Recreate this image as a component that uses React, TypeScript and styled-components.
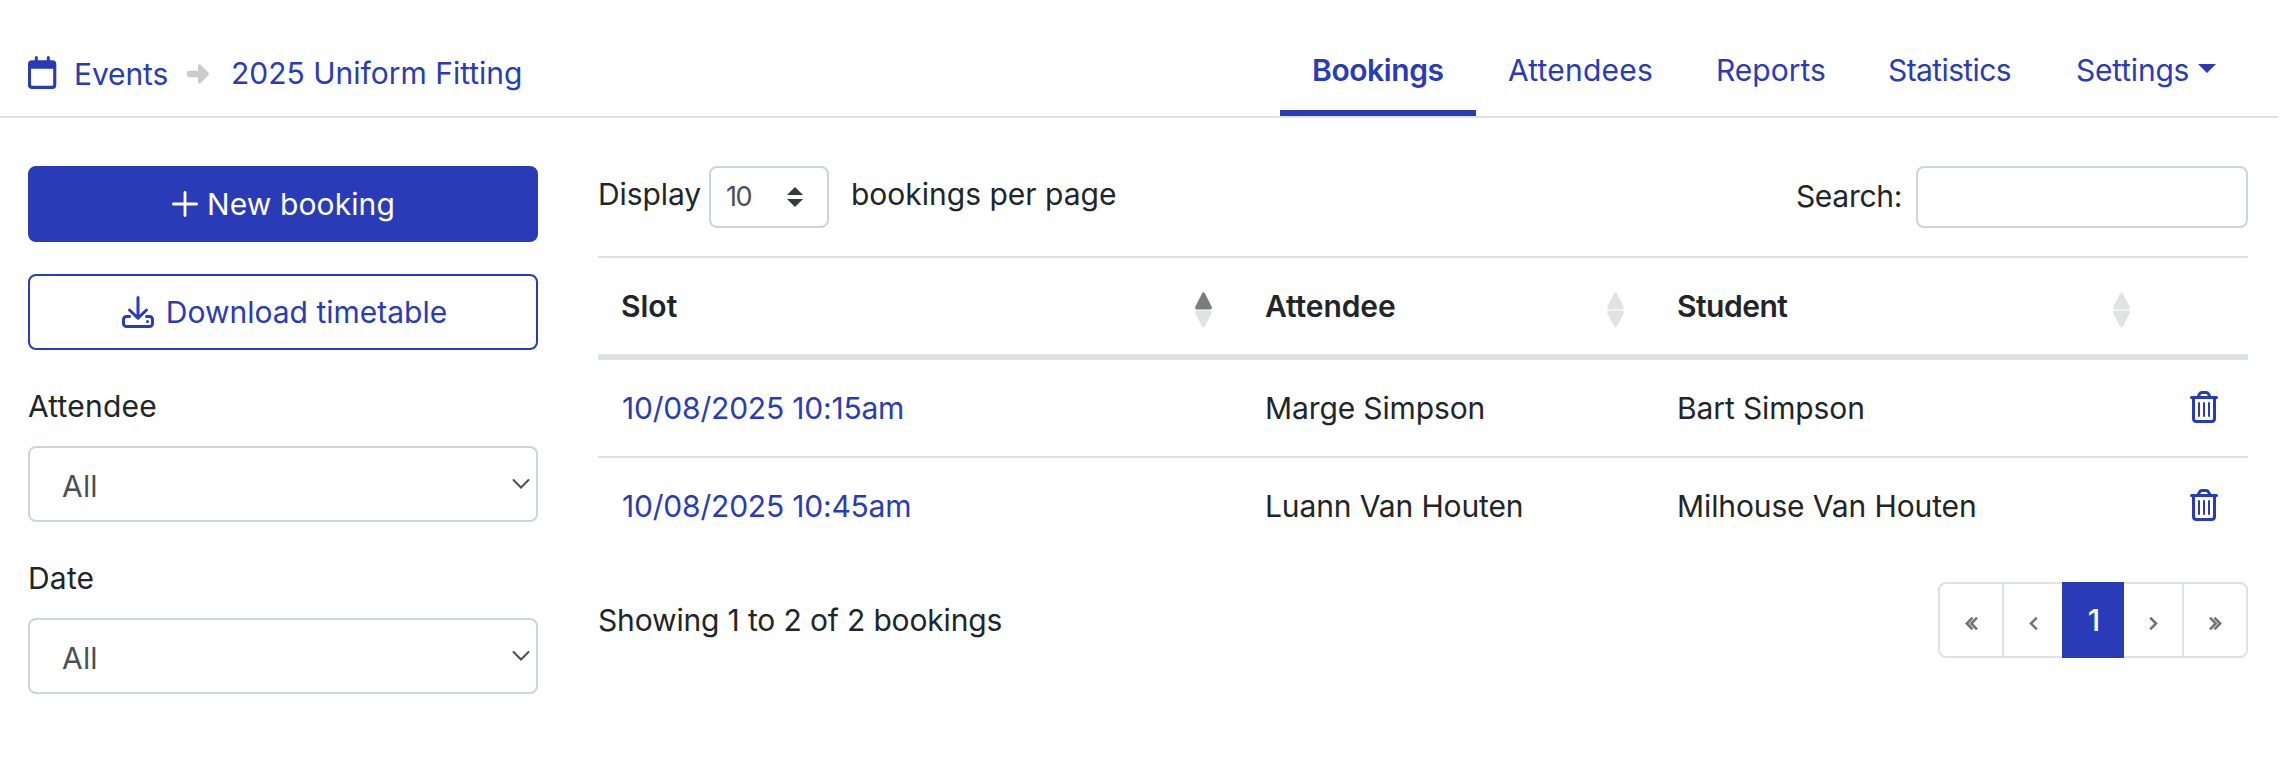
import React from 'react';
import styled, { createGlobalStyle } from 'styled-components';

const color = {
  primary: '#2a3bb7',
  text: '#212529',
  field: '#495057',
  muted: '#6c757d',
  line: '#dee2e6',
  fieldLine: '#ced4da',
};

const GlobalStyle = createGlobalStyle`
  *, *::before, *::after { box-sizing: border-box; }
  body {
    margin: 0;
    background: #fff;
    color: ${color.text};
    font-family: Inter, "Liberation Sans", sans-serif;
    font-size: 30px;
    line-height: 48px;
    -webkit-font-smoothing: antialiased;
  }
  a { color: inherit; text-decoration: none; }
  svg { display: block; flex: none; }
`;

const Page = styled.div`
  width: 100%;
  min-height: 766px;
  background: #fff;
`;

const Header = styled.header`
  display: flex;
  justify-content: space-between;
  height: 118px;
  margin-right: 10px;
  padding: 0 30px 0 28px;
  border-bottom: 2px solid ${color.line};
`;

const Breadcrumb = styled.nav`
  display: flex;
  align-items: flex-start;
  padding-top: 49px;
  color: ${color.primary};
`;

const EventsLink = styled.a`
  display: flex;
  margin-top: 1px;
  width: 159px;
  gap: 17px;
  letter-spacing: -0.1px;
  svg { margin-top: 6px; }
`;

const CrumbArrow = styled.span`
  width: 44px;
  padding-top: 15px;
`;

const Tabs = styled.nav`
  display: flex;
  align-items: flex-end;
`;

const Tab = styled.a<{ $width: number; $active?: boolean; $tracking?: number }>`
  display: flex;
  width: ${(p) => p.$width}px;
  padding: 0 0 16px 32px;
  border-bottom: 6px solid ${(p) => (p.$active ? color.primary : 'transparent')};
  color: ${color.primary};
  font-weight: ${(p) => (p.$active ? 600 : 400)};
  letter-spacing: ${(p) => p.$tracking ?? 0}px;
  white-space: nowrap;
`;

const Caret = styled.span`
  width: 0;
  height: 0;
  margin: 18px 0 0 9px;
  border: 9px solid transparent;
  border-top-color: ${color.primary};
  border-bottom: 0;
`;

const Main = styled.main`
  display: grid;
  grid-template-columns: 510px 1fr;
  column-gap: 60px;
  align-items: start;
  padding: 48px 40px 0 28px;
`;

const Sidebar = styled.aside`
  display: flex;
  flex-direction: column;
  gap: 32px;
`;

const Button = styled.button<{ $outline?: boolean }>`
  display: flex;
  justify-content: center;
  align-items: center;
  gap: ${(p) => (p.$outline ? 12 : 9)}px;
  height: 76px;
  padding: 0 0 0 ${(p) => (p.$outline ? 3 : 1)}px;
  border: 2px solid ${color.primary};
  border-radius: 8px;
  background: ${(p) => (p.$outline ? '#fff' : color.primary)};
  color: ${(p) => (p.$outline ? color.primary : '#fff')};
  font: inherit;
  letter-spacing: ${(p) => (p.$outline ? 0 : 0.1)}px;
`;

const Field = styled.label`
  display: flex;
  flex-direction: column;
  gap: 16px;
  letter-spacing: 0.2px;
`;

const SelectBox = styled.span`
  display: flex;
  justify-content: space-between;
  align-items: center;
  height: 76px;
  padding: 4px 6px 0 32px;
  border: 2px solid ${color.fieldLine};
  border-radius: 8px;
  color: ${color.field};
  svg { margin-top: -4px; }
`;

const Controls = styled.div`
  display: flex;
  justify-content: space-between;
  height: 62px;
  margin-bottom: 28px;
`;

const LengthControl = styled.label`
  display: flex;
  align-items: flex-start;
`;

const LengthText = styled.span<{ $after?: boolean }>`
  width: ${(p) => (p.$after ? 'auto' : '111px')};
  margin: 4px 0 0 ${(p) => (p.$after ? 22 : 0)}px;
  letter-spacing: ${(p) => (p.$after ? 0 : -0.1)}px;
  white-space: nowrap;
`;

const LengthSelect = styled.span`
  display: flex;
  justify-content: space-between;
  align-items: center;
  width: 120px;
  height: 62px;
  padding: 0 24px 0 15px;
  border: 2px solid ${color.fieldLine};
  border-radius: 8px;
  color: ${color.field};
  font-size: 27px;
  letter-spacing: -1.5px;
`;

const SearchControl = styled.label`
  display: flex;
  gap: 14px;
  line-height: 60px;
  letter-spacing: -0.3px;
`;

const SearchInput = styled.input`
  width: 332px;
  height: 62px;
  padding: 0 16px;
  border: 2px solid ${color.fieldLine};
  border-radius: 8px;
  background: #fff;
  font: inherit;
`;

const Table = styled.table`
  width: 100%;
  table-layout: fixed;
  border-collapse: separate;
  border-spacing: 0;
`;

const Th = styled.th<{ $width: number; $tracking?: number }>`
  width: ${(p) => p.$width}px;
  height: 104px;
  padding: 0 30px 0 23px;
  border-top: 2px solid ${color.line};
  border-bottom: 6px solid ${color.line};
  font-weight: 600;
  letter-spacing: ${(p) => p.$tracking ?? 0}px;
  text-align: left;
`;

const HeadCell = styled.div`
  display: flex;
  justify-content: space-between;
  align-items: center;
  svg { margin-top: 7px; }
`;

const Row = styled.tr`
  & + & td { border-top: 2px solid ${color.line}; }
`;

const Td = styled.td<{ $link?: boolean }>`
  padding: 24px 0 24px ${(p) => (p.$link ? 24 : 23)}px;
  color: ${(p) => (p.$link ? color.primary : color.text)};
  letter-spacing: ${(p) => (p.$link ? -0.2 : -0.12)}px;
  white-space: nowrap;
`;

const ActionCell = styled(Td)`
  padding-left: 30px;
  svg { margin-top: -2px; }
`;

const Footer = styled.div`
  display: flex;
  justify-content: space-between;
  align-items: center;
  margin-top: 28px;
`;

const Info = styled.span`
  letter-spacing: -0.15px;
`;

const Pagination = styled.nav`
  display: flex;
  height: 76px;
`;

const PageLink = styled.a<{ $width: number; $active?: boolean; $afterActive?: boolean }>`
  display: flex;
  justify-content: center;
  align-items: center;
  width: ${(p) => p.$width}px;
  border-style: solid;
  border-color: ${(p) => (p.$active ? color.primary : color.line)};
  border-width: 2px 0 2px ${(p) => (p.$afterActive ? 0 : 2)}px;
  background: ${(p) => (p.$active ? color.primary : '#fff')};
  color: ${(p) => (p.$active ? '#fff' : color.muted)};
  font-weight: ${(p) => (p.$active ? 500 : 400)};
  &:first-child { border-radius: 8px 0 0 8px; }
  &:last-child { border-right-width: 2px; border-radius: 0 8px 8px 0; }
  svg { margin-top: 6px; }
`;

const CalendarIcon = () => (
  <svg width="29" height="33" viewBox="0 0 29 33" fill="none">
    <path d="M8.3 1.6V6M20.3 1.6V6" stroke={color.primary} strokeWidth="3" strokeLinecap="round" />
    <path fillRule="evenodd" fill={color.primary} d="M4 4.3h20.3a4 4 0 0 1 4 4V29a4 4 0 0 1-4 4H4a4 4 0 0 1-4-4V8.300a4 4 0 0 1 4-4ZM3 12.800V28.600a1.200 1.200 0 0 0 1.200 1.200H24a1.200 1.200 0 0 0 1.200-1.200V12.800Z" />
  </svg>
);

const ArrowIcon = () => (
  <svg width="22" height="20" viewBox="0 0 22 20" fill="#cbcbcb">
    <path d="M2 6.700H11V2C11 .4 12.700-.2 13.800.9L21.300 8.600C22.100 9.500 22.100 10.500 21.300 11.300L13.800 18.900C12.700 20 11 19.400 11 17.900V13.300H2C.8 13.300 0 12.500 0 11.300V8.700C0 7.500.8 6.700 2 6.700Z" />
  </svg>
);

const PlusIcon = () => (
  <svg width="26" height="26" viewBox="0 0 26 26" stroke="#fff" strokeWidth="2.800" strokeLinecap="round">
    <path d="M1.400 13H24.600M13 1.400V24.600" />
  </svg>
);

const DownloadIcon = () => (
  <svg width="32" height="32" viewBox="0 0 32 32" fill="none" stroke={color.primary} strokeWidth="3" strokeLinecap="round" strokeLinejoin="round">
    <path d="M16 1.500V22M7.500 14L16 22.300L24.500 14" />
    <path d="M7.500 20.500H4.500A3 3 0 0 0 1.500 23.500V27.500A3 3 0 0 0 4.500 30.500H27.500A3 3 0 0 0 30.500 27.500V23.500A3 3 0 0 0 27.500 20.500H24.500" />
    <circle cx="25.500" cy="25.500" r="1.500" fill={color.primary} stroke="none" />
  </svg>
);

const ChevronIcon = () => (
  <svg width="18" height="12" viewBox="0 0 18 12" fill="none" stroke={color.field} strokeWidth="2" strokeLinecap="round">
    <path d="M1.500 2L9 9.500L16.500 2" />
  </svg>
);

const StepperIcon = () => (
  <svg width="16" height="20" viewBox="0 0 16 20" fill="#343a40">
    <path d="M8 0L16 8H0ZM0 12H16L8 20Z" />
  </svg>
);

const SortIcon = ({ ascending = false }: { ascending?: boolean }) => (
  <svg width="17" height="36" viewBox="0 0 17 36">
    <path fill={ascending ? '#7b7c80' : '#e1e3e2'} d="M7 1.500Q8.500-.8 10 1.500L16.700 14.800Q17.200 17.400 15.500 17.400H1.500Q-.2 17.400 .3 14.800Z" />
    <path fill="#e1e3e2" d="M7 34.500Q8.500 36.800 10 34.500L16.700 21.200Q17.200 18.600 15.500 18.600H1.500Q-.2 18.600 .3 21.200Z" />
  </svg>
);

const TrashIcon = () => (
  <svg width="28" height="32" viewBox="0 0 28 32" fill="none" stroke={color.primary} strokeLinecap="round" strokeLinejoin="round">
    <path strokeWidth="3" d="M1.500 6.500H26.500M8 6L9.600 2.900Q10.300 1.500 11.800 1.500H16.200Q17.700 1.500 18.400 2.900L20 6M3.500 7V27.500Q3.500 30.500 6.600 30.500H21.400Q24.500 30.500 24.500 27.500V7" />
    <path strokeWidth="2" d="M9 12V25M14 12V25M19 12V25" />
  </svg>
);

const Angles = ({ double = false, flip = false }: { double?: boolean; flip?: boolean }) => (
  <svg width={double ? 13 : 9} height="13" viewBox={double ? '0 0 13 13' : '0 0 9 13'} fill="none" stroke={color.muted} strokeWidth="2.600">
    <g transform={flip ? `translate(${double ? 13 : 9} 0) scale(-1 1)` : undefined}>
      <path d={double ? 'M7.500.7L1.800 6.500L7.500 12.300M12 .7L6.300 6.500L12 12.300' : 'M7.800.7L2 6.500L7.800 12.300'} />
    </g>
  </svg>
);

const bookings = [
  { slot: '10/08/2025 10:15am', attendee: 'Marge Simpson', student: 'Bart Simpson' },
  { slot: '10/08/2025 10:45am', attendee: 'Luann Van Houten', student: 'Milhouse Van Houten' },
];

export default function App() {
  return (
    <Page>
      <GlobalStyle />
      <Header>
        <Breadcrumb>
          <EventsLink href="#"><CalendarIcon />Events</EventsLink>
          <CrumbArrow><ArrowIcon /></CrumbArrow>
          <a href="#">2025 Uniform Fitting</a>
        </Breadcrumb>
        <Tabs>
          <Tab href="#" $width={196} $active $tracking={-0.4}>Bookings</Tab>
          <Tab href="#" $width={208} $tracking={0.2}>Attendees</Tab>
          <Tab href="#" $width={172}>Reports</Tab>
          <Tab href="#" $width={188} $tracking={-0.6}>Statistics</Tab>
          <Tab href="#" $width={204} $tracking={-0.2}>Settings<Caret /></Tab>
        </Tabs>
      </Header>
      <Main>
        <Sidebar>
          <Button><PlusIcon />New booking</Button>
          <Button $outline><DownloadIcon />Download timetable</Button>
          <Field>Attendee<SelectBox>All<ChevronIcon /></SelectBox></Field>
          <Field>Date<SelectBox>All<ChevronIcon /></SelectBox></Field>
        </Sidebar>
        <section>
          <Controls>
            <LengthControl>
              <LengthText>Display</LengthText>
              <LengthSelect>10<StepperIcon /></LengthSelect>
              <LengthText $after>bookings per page</LengthText>
            </LengthControl>
            <SearchControl>Search:<SearchInput /></SearchControl>
          </Controls>
          <Table>
            <thead>
              <tr>
                <Th $width={644}><HeadCell>Slot<SortIcon ascending /></HeadCell></Th>
                <Th $width={412} $tracking={-0.1}><HeadCell>Attendee<SortIcon /></HeadCell></Th>
                <Th $width={506} $tracking={-0.5}><HeadCell>Student<SortIcon /></HeadCell></Th>
                <Th $width={88} />
              </tr>
            </thead>
            <tbody>
              {bookings.map((b) => (
                <Row key={b.slot}>
                  <Td $link><a href="#">{b.slot}</a></Td>
                  <Td>{b.attendee}</Td>
                  <Td>{b.student}</Td>
                  <ActionCell><TrashIcon /></ActionCell>
                </Row>
              ))}
            </tbody>
          </Table>
          <Footer>
            <Info>Showing 1 to 2 of 2 bookings</Info>
            <Pagination>
              <PageLink href="#" $width={64}><Angles double /></PageLink>
              <PageLink href="#" $width={60}><Angles /></PageLink>
              <PageLink href="#" $width={62} $active>1</PageLink>
              <PageLink href="#" $width={58} $afterActive><Angles flip /></PageLink>
              <PageLink href="#" $width={66}><Angles double flip /></PageLink>
            </Pagination>
          </Footer>
        </section>
      </Main>
    </Page>
  );
}
